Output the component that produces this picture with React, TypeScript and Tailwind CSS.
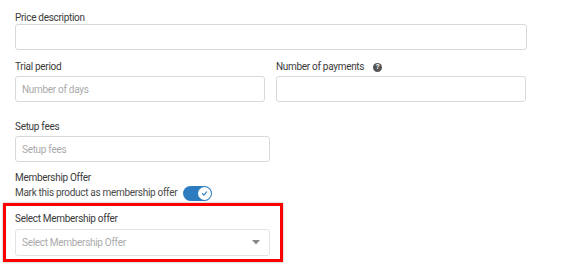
import React from "react";

const font = { fontFamily: 'Roboto, "Open Sans", sans-serif' };

function Label({ children }: { children: React.ReactNode }) {
  return <div className="h-[12px] text-[10px] leading-[12px] tracking-[-0.3px] text-[#3a3a3a]">{children}</div>;
}

function Input({ placeholder, className }: { placeholder?: string; className: string }) {
  return (
    <div className={`h-[26px] rounded-[3px] border border-[#d9d9d9] bg-white flex items-center px-[6px] text-[10px] tracking-[-0.3px] text-[#aaaaaa] ${className}`}>
      {placeholder}
    </div>
  );
}

export default function App() {
  return (
    <div className="w-[577px] h-[264px] bg-white overflow-hidden pt-[12px]" style={font}>
      <div className="pl-[15px]">
        <Label>Price description</Label>
        <Input className="mt-0 w-[512px]" />

        <div className="flex gap-[11px] mt-[11px]">
          <div className="w-[250px]">
            <Label>Trial period</Label>
            <Input className="mt-[3px]" placeholder="Number of days" />
          </div>
          <div className="w-[250px]">
            <div className="flex items-center gap-[9px]">
              <Label>Number of payments</Label>
              <div className="w-[9px] h-[9px] rounded-full bg-[#555] text-white text-[7px] font-bold leading-[9px] flex items-center justify-center">?</div>
            </div>
            <Input className="mt-[3px]" />
          </div>
        </div>

        <div className="mt-[19px]">
          <Label>Setup fees</Label>
          <Input className="mt-[3px] w-[255px]" placeholder="Setup fees" />
        </div>

        <div className="mt-[10px]">
          <Label>Membership Offer</Label>
          <div className="flex items-center gap-[6px] mt-[1px] h-[16px]">
            <span className="text-[10px] leading-[12px] tracking-[-0.3px] text-[#4a4a4a]">Mark this product as membership offer</span>
            <div className="w-[29px] h-[15px] rounded-full bg-[#2d7cbf] flex items-center justify-end pr-[1px]">
              <div className="w-[13px] h-[13px] rounded-full bg-white flex items-center justify-center">
                <svg width="7" height="7" viewBox="0 0 10 10">
                  <path d="M2 5.2 L4.2 7.3 L8 2.8" fill="none" stroke="#2d7cbf" strokeWidth="1.6" strokeLinecap="round" strokeLinejoin="round" />
                </svg>
              </div>
            </div>
          </div>
        </div>
      </div>

      <div className="ml-[3px] mt-[2px] w-[280px] h-[59px] border-[3px] border-[#ff0000] pl-[9px] pt-[7px] shadow-[0_0_2px_rgba(0,0,0,0.35)]">
        <Label>Select Membership offer</Label>
        <div className="mt-[4px] w-[255px] h-[27px] rounded-[3px] border border-[#e3e3e3] bg-white flex items-center justify-between px-[6px] text-[10px] tracking-[-0.3px] text-[#aaaaaa]">
          <span>Select Membership Offer</span>
          <svg width="8" height="5" viewBox="0 0 8 5" className="mr-[3px]">
            <path d="M0 0 L8 0 L4 4.5 Z" fill="#888" />
          </svg>
        </div>
      </div>
    </div>
  );
}
